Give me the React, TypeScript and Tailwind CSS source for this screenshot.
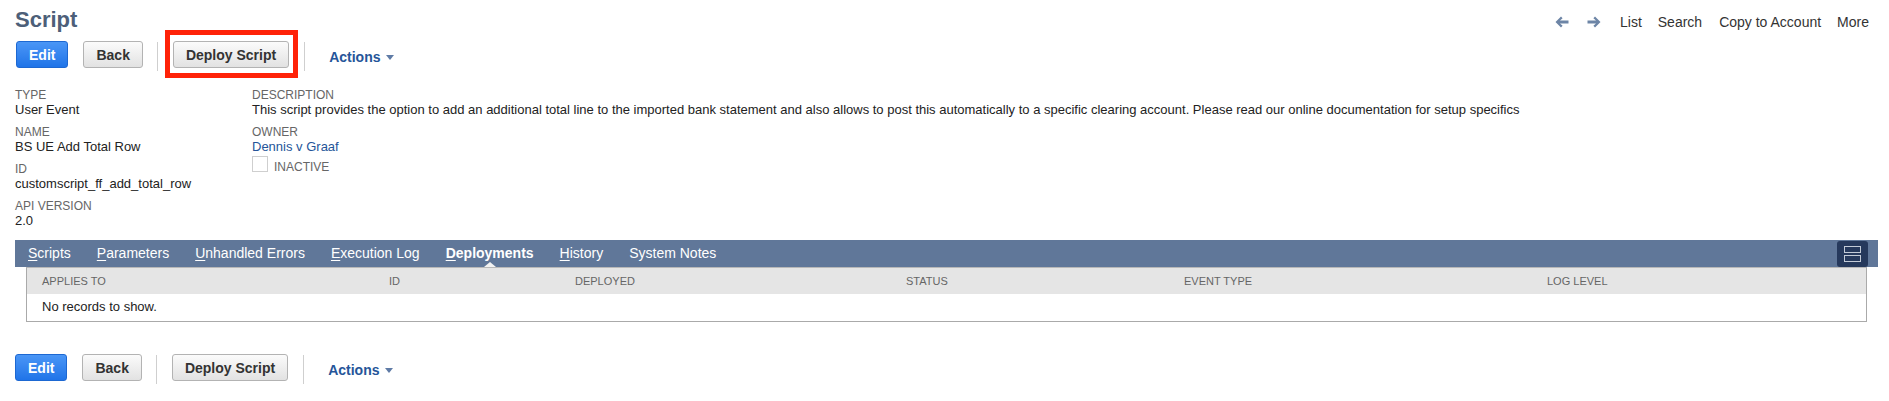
import React from "react";

const tabs = [
  { label: "Scripts", active: false },
  { label: "Parameters", active: false },
  { label: "Unhandled Errors", active: false },
  { label: "Execution Log", active: false },
  { label: "Deployments", active: true },
  { label: "History", active: false },
  { label: "System Notes", active: false, noKey: true },
];

const columns = [
  { label: "Applies To", w: "w-[347px]" },
  { label: "ID", w: "w-[186px]" },
  { label: "Deployed", w: "w-[331px]" },
  { label: "Status", w: "w-[278px]" },
  { label: "Event Type", w: "w-[363px]" },
  { label: "Log Level", w: "flex-1" },
];

function Arrow({ flip }: { flip?: boolean }) {
  return (
    <svg
      width="14"
      height="12"
      viewBox="0 0 14 12"
      fill="#6d85a6"
      className={flip ? "rotate-180" : ""}
    >
      <path d="M0.5 6 L6 0.6 L7.6 2.2 L5 4.6 H13.5 V7.4 H5 L7.6 9.8 L6 11.4 Z" />
    </svg>
  );
}

function GrayButton({ children }: { children: React.ReactNode }) {
  return (
    <button className="h-[27px] px-[12px] rounded-[3px] border border-[#b3b3b3] bg-gradient-to-b from-[#fbfbfb] to-[#e2e2e2] text-[14px] font-bold text-[#333] leading-none">
      {children}
    </button>
  );
}

function Toolbar({ highlight }: { highlight?: boolean }) {
  return (
    <div className="flex items-center h-[27px] ml-[1px]">
      <button className="h-[27px] px-[12px] rounded-[3px] border border-[#1d68d2] bg-gradient-to-b from-[#4a96f6] to-[#1f74e8] text-[14px] font-bold text-white leading-none">
        Edit
      </button>
      <div className="ml-[15px]">
        <GrayButton>Back</GrayButton>
      </div>
      <div className="ml-[14px] w-px h-[29px] mt-[3px] bg-[#cfcfcf]" />
      <div className="ml-[15px] relative">
        <GrayButton>Deploy Script</GrayButton>
        {highlight && (
          <div className="absolute -left-[8px] -right-[9px] -top-[11px] -bottom-[10px] border-[5px] border-[#ff2208] pointer-events-none" />
        )}
      </div>
      <div className="ml-[15px] w-px h-[29px] mt-[3px] bg-[#cfcfcf]" />
      <div className="ml-[24px] mt-[5px] flex items-center gap-[5px] text-[14px] font-bold text-[#255599]">
        Actions
        <svg width="8" height="5" viewBox="0 0 8 5" fill="#5f7ba6">
          <path d="M0 0 H8 L4 5 Z" />
        </svg>
      </div>
    </div>
  );
}

function Field({ label, children }: { label: string; children: React.ReactNode }) {
  return (
    <div className="mb-[9px]">
      <div className="text-[12px] leading-[13px] text-[#666] uppercase">{label}</div>
      <div className="text-[13px] leading-[15px] text-[#222]">{children}</div>
    </div>
  );
}

export default function App() {
  return (
    <div className="w-full min-h-[401px] bg-white pl-[15px] pr-[11px] font-['Liberation_Sans',Arial,Helvetica,sans-serif] text-[#222]">
      {/* Title row */}
      <div className="flex items-start justify-between">
        <h1 className="pt-[7px] text-[22px] leading-[26px] font-bold text-[#4d5f79]">Script</h1>
        <div className="pt-[13px] pr-[9px] flex items-center text-[14px] leading-[18px] text-[#333]">
          <Arrow />
          <span className="ml-[18px]">
            <Arrow flip />
          </span>
          <span className="ml-[19px]">List</span>
          <span className="ml-[16px]">Search</span>
          <span className="ml-[17px]">Copy to Account</span>
          <span className="ml-[16px]">More</span>
        </div>
      </div>

      <div className="mt-[8px]">
        <Toolbar highlight />
      </div>

      {/* Main fields */}
      <div className="flex mt-[21px]">
        <div className="w-[237px]">
          <Field label="Type">User Event</Field>
          <Field label="Name">BS UE Add Total Row</Field>
          <Field label="ID">customscript_ff_add_total_row</Field>
          <Field label="API Version">2.0</Field>
        </div>
        <div className="flex-1">
          <Field label="Description">
            This script provides the option to add an additional total line to the imported bank statement and also allows to post this automatically to a specific clearing account. Please read our online documentation for setup specifics
          </Field>
          <div className="mb-[2px]">
            <div className="text-[12px] leading-[13px] text-[#666] uppercase">Owner</div>
            <div className="text-[13px] leading-[15px] text-[#255599]">Dennis v Graaf</div>
          </div>
          <div className="flex items-end">
            <div className="w-[16px] h-[16px] border border-[#cfcfcf] bg-white" />
            <span className="ml-[6px] text-[12px] leading-[12px] -mb-[1px] text-[#666]">INACTIVE</span>
          </div>
        </div>
      </div>

      {/* Subtab bar */}
      <div className="mt-[3px] h-[27px] bg-[#607799] flex items-center justify-between pr-[10px]">
        <div className="flex h-full">
          {tabs.map((t) => (
            <div
              key={t.label}
              className={`relative px-[13px] h-full flex items-center text-[14px] text-white ${t.active ? "font-bold" : ""}`}
            >
              {t.noKey ? (
                t.label
              ) : (
                <span>
                  <span className="underline underline-offset-[2px]">{t.label[0]}</span>
                  {t.label.slice(1)}
                </span>
              )}
              {t.active && (
                <span className="absolute bottom-0 left-1/2 -translate-x-1/2 w-0 h-0 border-l-[6px] border-r-[6px] border-b-[5px] border-l-transparent border-r-transparent border-b-[#f2f2f2]" />
              )}
            </div>
          ))}
        </div>
        <div className="self-end w-[31px] h-[26px] rounded-[3px] bg-[#26395c] flex flex-col items-center justify-center gap-[2px]">
          <div className="w-[17px] h-[7px] border-[1.5px] border-[#c3cbd7]" />
          <div className="w-[17px] h-[7px] border-[1.5px] border-[#c3cbd7]" />
        </div>
      </div>

      {/* Deployments list */}
      <div className="mx-[11px] border border-[#aaa] border-t-[#b8b8b8]">
        <div className="h-[26px] bg-[#e5e5e5] flex items-center pl-[15px] text-[11px] text-[#666] uppercase">
          {columns.map((c) => (
            <div key={c.label} className={c.w}>
              {c.label}
            </div>
          ))}
        </div>
        <div className="h-[27px] flex items-center pl-[15px] text-[13px] text-[#222] pb-[2px]">
          No records to show.
        </div>
      </div>

      <div className="mt-[32px] -ml-[1px]">
        <Toolbar />
      </div>
    </div>
  );
}
